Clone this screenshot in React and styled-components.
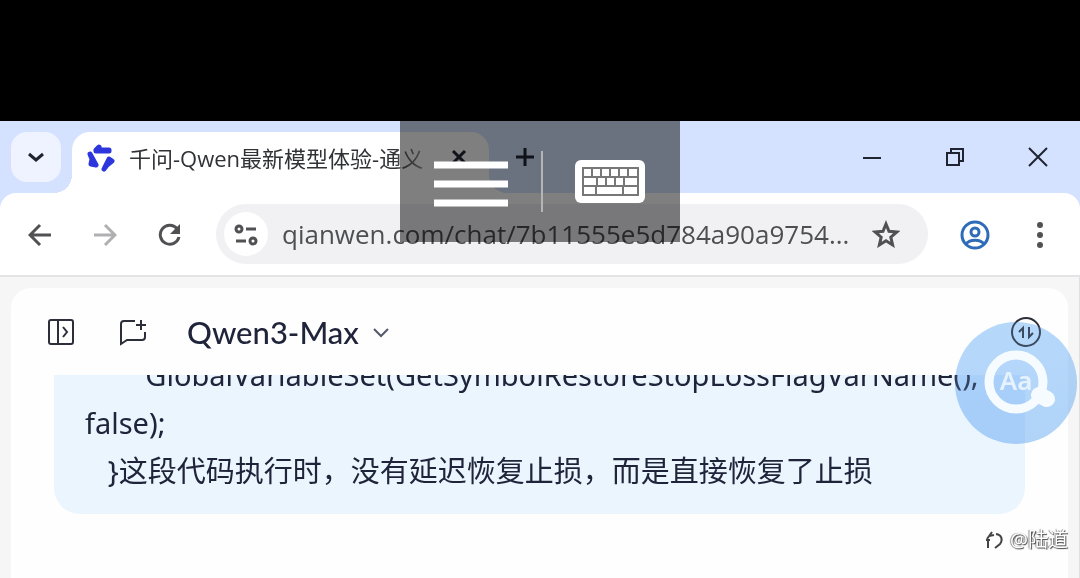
import styled, { createGlobalStyle } from 'styled-components';

const GlobalStyle = createGlobalStyle`
    * {
        box-sizing: border-box;
    }

    body {
        margin: 0;
        background-color: #000000;
        font-family: 'Open Sans', 'Noto Sans CJK SC', sans-serif;
    }

    button {
        display: flex;
        align-items: center;
        justify-content: center;
        padding: 0;
        border: none;
        background: none;
        color: inherit;
        font: inherit;
        cursor: pointer;
    }

    svg {
        display: block;
        flex-shrink: 0;
    }
`;

const message = `        GlobalVariableSet(GetSymbolRestoreStopLossFlagVarName(), false);
   }这段代码执行时，没有延迟恢复止损，而是直接恢复了止损`;

function Icon({ size = 28, width = 2, children, ...props }) {
    return (
        <svg
            width={size}
            height={size}
            viewBox={`0 0 ${size} ${size}`}
            fill="none"
            stroke="currentColor"
            strokeWidth={width}
            aria-hidden="true"
            {...props}
        >
            {children}
        </svg>
    );
}

function TabStrip() {
    return (
        <Strip>
            <TabSearch aria-label="Search tabs">
                <Icon size={20} width={3}>
                    <path d="M3 7l7 6 7-6" />
                </Icon>
            </TabSearch>
            <Tab>
                <Icon size={28} width={5} color="#2c36dc" strokeLinejoin="round" strokeLinecap="round">
                    <path d="M12 3L9 6h13v1H9z" />
                    <path d="M3 10l6 11-5-1 1-5z" />
                    <path d="M17 25l5-10 3 2-5 4z" />
                </Icon>
                <TabTitle>千问-Qwen最新模型体验-通义</TabTitle>
                <TabClose aria-label="Close tab">
                    <Icon size={16} width={3}>
                        <path d="M2 1l12 12M14 1L2 13" />
                    </Icon>
                </TabClose>
            </Tab>
            <NewTab aria-label="New tab">
                <Icon size={20} width={3}>
                    <path d="M10 1v18M1 10h18" />
                </Icon>
            </NewTab>
            <WindowControls>
                <button aria-label="Minimize">
                    <Icon size={20}>
                        <path d="M1 11h18" />
                    </Icon>
                </button>
                <button aria-label="Restore">
                    <Icon size={20}>
                        <path d="M2 6h12v12H2zM6 6V2h12v12h-4" />
                    </Icon>
                </button>
                <button aria-label="Close">
                    <Icon size={20}>
                        <path d="M1 1l18 18M19 1L1 19" />
                    </Icon>
                </button>
            </WindowControls>
        </Strip>
    );
}

function Toolbar() {
    return (
        <Bar>
            <NavButtons>
                <button aria-label="Back">
                    <Icon size={24} width={3}>
                        <path d="M23 13H3M12 3L2 13l10 10" />
                    </Icon>
                </button>
                <ForwardButton aria-label="Forward">
                    <Icon size={24} width={3}>
                        <path d="M1 13h20M12 3l10 10-10 10" />
                    </Icon>
                </ForwardButton>
                <button aria-label="Reload">
                    <Icon size={24} width={3}>
                        <path d="M19 6.500A9.500 9.500 0 1 0 21 15" />
                        <path d="M22 2v10H12z" fill="currentColor" stroke="none" />
                    </Icon>
                </button>
            </NavButtons>
            <AddressBar>
                <SiteInfo aria-label="Site information">
                    <Icon size={24} width={3}>
                        <circle cx="5" cy="7" r="3" />
                        <path d="M12 7h10M2 19h10" />
                        <circle cx="19" cy="19" r="3" />
                    </Icon>
                </SiteInfo>
                <Url
                    aria-label="Address"
                    readOnly
                    value="qianwen.com/chat/7b11555e5d784a90a9754..."
                />
                <button aria-label="Bookmark">
                    <Icon size={28} width={3}>
                        <path d="M14 4l3 7.300 7.800.7-6 5.200 1.800 7.700L14 20.800l-6.600 4.100 1.800-7.700-6-5.200 7.800-.7z" />
                    </Icon>
                </button>
            </AddressBar>
            <ProfileButton aria-label="Profile">
                <Icon size={32} width={3}>
                    <circle cx="16" cy="17" r="13" />
                    <circle cx="16" cy="14" r="4" />
                    <path d="M7 26c4-5 14-5 18 0" />
                </Icon>
            </ProfileButton>
            <button aria-label="Menu">
                <Icon size={28} fill="currentColor" stroke="none">
                    <circle cx="14" cy="5" r="3" />
                    <circle cx="14" cy="15" r="3" />
                    <circle cx="14" cy="25" r="3" />
                </Icon>
            </button>
        </Bar>
    );
}

function Chat() {
    return (
        <Panel>
            <ChatHeader>
                <ChatTools>
                    <button aria-label="Open sidebar">
                        <Icon size={28}>
                            <rect x="2" y="2" width="24" height="24" rx="2" />
                            <path d="M11 2v24M16 9l4 5-4 5" />
                        </Icon>
                    </button>
                    <button aria-label="New chat">
                        <Icon size={28}>
                            <path d="M16 3H5a3 3 0 0 0-3 3v20l6-4h15a3 3 0 0 0 3-3v-5M22 2v10M17 7h10" />
                        </Icon>
                    </button>
                </ChatTools>
                <ModelButton>
                    Qwen3-Max
                    <Icon size={16} color="#55586a">
                        <path d="M1 5l7 7 7-7" />
                    </Icon>
                </ModelButton>
                <SortButton aria-label="Switch order">
                    <Icon size={32}>
                        <circle cx="16" cy="16" r="14" />
                        <path d="M9 16l4-4v10M19 11v10l4-4" />
                    </Icon>
                </SortButton>
            </ChatHeader>
            <Messages>
                <Bubble>{message}</Bubble>
            </Messages>
        </Panel>
    );
}

function RemoteControls() {
    return (
        <ControlBox>
            <button aria-label="Menu">
                <Icon size={76} width={7}>
                    <path d="M1 21h74M1 40h74M1 59h74" />
                </Icon>
            </button>
            <Divider />
            <button aria-label="Keyboard">
                <svg width="70" height="44" viewBox="0 0 70 44" aria-hidden="true">
                    <rect width="70" height="43" rx="6" fill="#ffffff" />
                    <path
                        d="M8 8h55v27H8zM8 17h55M8 26h55M17 8v9M26 8v9M35 8v9M44 8v9M53 8v9M22 17v9M31 17v9M40 17v9M49 17v9M21 26v9M48 26v9"
                        fill="none"
                        stroke="#777777"
                        strokeWidth="2"
                    />
                </svg>
            </button>
        </ControlBox>
    );
}

export default function App() {
    return (
        <Screen>
            <GlobalStyle />
            <Browser>
                <TabStrip />
                <Toolbar />
                <Page>
                    <Chat />
                </Page>
                <RemoteControls />
                <TranslateTint />
                <TranslateButton aria-label="Translate">
                    <svg width="122" height="122" viewBox="0 0 122 122" aria-hidden="true">
                        <path d="M84 73l8 4" stroke="#f6fbff" strokeWidth="16" strokeLinecap="round" />
                        <circle cx="61" cy="60" r="27" fill="none" stroke="#f6fbff" strokeWidth="9" />
                        <text x="61" y="68" textAnchor="middle" fill="#e6f2fe">
                            Aa
                        </text>
                    </svg>
                </TranslateButton>
                <Watermark>
                    <Icon size={20}>
                        <path d="M8 2L3 9M5 6l5-1M2 10h4M4 10v8M12 4c6 1 7 6 4 10l-5 4" />
                    </Icon>
                    @陆道
                </Watermark>
            </Browser>
        </Screen>
    );
}

const Screen = styled.div`
    display: flex;
    height: 100vh;
    padding-top: 121px;
`;

const Browser = styled.div`
    position: relative;
    flex: 1;
    display: flex;
    flex-direction: column;
    min-width: 0;
    overflow: hidden;
    background-color: #d5e2ff;
`;

const Strip = styled.header`
    display: flex;
    align-items: center;
    height: 72px;
    padding: 0 32px 0 11px;
    color: #1f2430;
`;

const TabSearch = styled.button`
    width: 50px;
    height: 50px;
    border-radius: 16px;
    && {
        background-color: #eff3ff;
    }
`;

const Tab = styled.div`
    position: relative;
    align-self: flex-end;
    display: flex;
    align-items: center;
    gap: 14px;
    width: 417px;
    height: 61px;
    margin-left: 11px;
    padding: 0 20px 10px 15px;
    border-radius: 18px 18px 0 0;
    background-color: #ffffff;

    &::before,
    &::after {
        content: '';
        position: absolute;
        bottom: 0;
        width: 18px;
        height: 18px;
    }

    &::before {
        right: 100%;
        background: radial-gradient(circle at 0 0, transparent 18px, #ffffff 18px);
    }

    &::after {
        left: 100%;
        background: radial-gradient(circle at 100% 0, transparent 18px, #ffffff 18px);
    }
`;

const TabTitle = styled.span`
    flex: 1;
    white-space: nowrap;
    font-size: 22px;
    line-height: 32px;
    color: #303236;
    mask-image: linear-gradient(to right, #000000 265px, transparent 320px);
`;

const TabClose = styled.button`
    width: 20px;
    height: 20px;
`;

const NewTab = styled.button`
    width: 40px;
    height: 40px;
    margin-left: 16px;
`;

const WindowControls = styled.div`
    display: flex;
    gap: 63px;
    margin-left: auto;
`;

const Bar = styled.nav`
    display: flex;
    align-items: center;
    height: 84px;
    padding: 0 26px;
    border-bottom: 2px solid #e4e4e6;
    border-radius: 16px 16px 0 0;
    background-color: #ffffff;
    color: #515154;
`;

const NavButtons = styled.div`
    display: flex;
    gap: 41px;
    padding: 0 34px 0 2px;
`;

const ForwardButton = styled.button`
    && {
        color: #b0b0b2;
    }
`;

const AddressBar = styled.div`
    flex: 1;
    display: flex;
    align-items: center;
    height: 60px;
    min-width: 0;
    padding: 0 28px 0 8px;
    border-radius: 30px;
    background-color: #f1f1f4;
`;

const SiteInfo = styled.button`
    width: 44px;
    height: 44px;
    border-radius: 50%;
    && {
        background-color: #ffffff;
    }
`;

const Url = styled.input`
    flex: 1;
    min-width: 0;
    margin-left: 14px;
    padding: 0;
    border: none;
    outline: none;
    background: none;
    color: #4e4f53;
    font-family: inherit;
    font-size: 26px;
`;

const ProfileButton = styled.button`
    margin: 0 35px 0 31px;
    && {
        color: #2f6cb8;
    }
`;

const Page = styled.div`
    flex: 1;
    display: flex;
    min-height: 0;
    padding: 11px 11px 0;
    border-right: 1px solid #e0e0e2;
    background-color: #f6f6f7;
`;

const Panel = styled.main`
    flex: 1;
    display: flex;
    flex-direction: column;
    min-width: 0;
    border-radius: 20px 20px 0 0;
    background-color: #fefefe;
`;

const ChatHeader = styled.div`
    display: flex;
    align-items: center;
    height: 87px;
    padding: 0 26px 0 36px;
    flex-shrink: 0;
    color: #2c2e3a;
`;

const ChatTools = styled.div`
    display: flex;
    gap: 44px;
`;

const ModelButton = styled.button`
    gap: 14px;
    margin-left: 40px;
    && {
        color: #20243a;
        font-family: Lato, sans-serif;
        font-size: 31px;
        font-weight: 500;
        line-height: 36px;
    }
`;

const SortButton = styled.button`
    margin-left: auto;
`;

const Messages = styled.div`
    flex: 1;
    display: flex;
    flex-direction: column;
    justify-content: flex-end;
    min-height: 0;
    padding: 0 43px 64px;
    overflow: hidden;
`;

const Bubble = styled.p`
    flex-shrink: 0;
    margin: 0;
    padding: 19px 31px;
    border-radius: 26px;
    background-color: #ebf5fe;
    color: #20243a;
    font-family: 'Noto Sans', 'Noto Sans CJK SC', sans-serif;
    font-size: 29px;
    line-height: 48px;
    white-space: pre-wrap;
`;

const ControlBox = styled.div`
    position: absolute;
    top: 0;
    left: 50%;
    display: flex;
    align-items: center;
    gap: 32px;
    width: 280px;
    height: 121px;
    padding-left: 33px;
    background-color: rgba(0, 0, 0, 0.5);
    color: #ffffff;
    transform: translateX(-50%);
`;

const Divider = styled.span`
    width: 2px;
    height: 61px;
    background-color: #b5b5b5;
`;

const TranslateTint = styled.div`
    position: absolute;
    right: 3px;
    top: 201px;
    width: 122px;
    height: 122px;
    border-radius: 50%;
    background: linear-gradient(#bcdcfc, #b4d5f9);
    mix-blend-mode: multiply;
`;

const TranslateButton = styled.button`
    position: absolute;
    right: 3px;
    top: 201px;
    border-radius: 50%;
    && {
        background-color: rgba(165, 208, 250, 0.2);
    }

    text {
        font-family: 'Noto Sans', sans-serif;
        font-size: 26px;
        font-weight: 600;
    }
`;

const Watermark = styled.div`
    position: absolute;
    right: 12px;
    bottom: 24px;
    display: flex;
    align-items: center;
    gap: 6px;
    color: #ffffff;
    font-size: 20px;
    line-height: 28px;
    text-shadow: 1px 1px 1px #444444, -1px 0 1px #888888;

    svg {
        color: #444444;
    }
`;
